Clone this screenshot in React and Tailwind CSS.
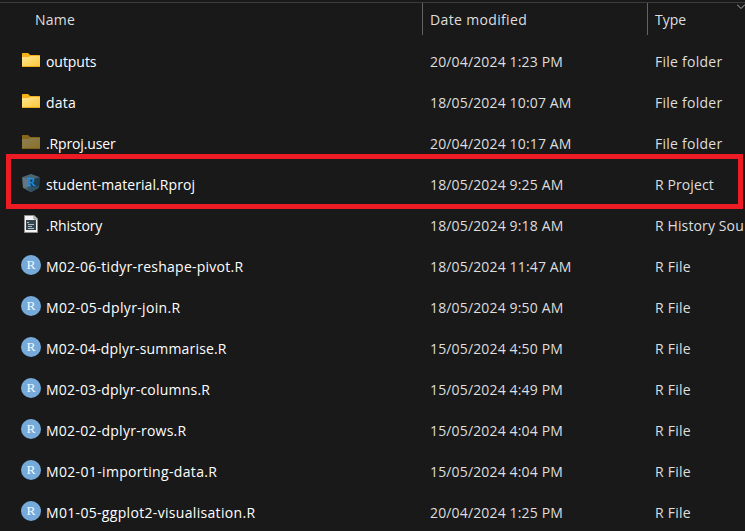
const files = [
  { icon: 'folder', name: 'outputs', nameFit: 'tracking-[-0.05px]', date: '20/04/2024 1:23 PM', type: 'File folder', typeFit: 'tracking-[0.25px]' },
  { icon: 'folder', name: 'data', nameFit: 'tracking-[0.2px]', date: '18/05/2024 10:07 AM', type: 'File folder', typeFit: 'tracking-[0.25px]' },
  { icon: 'hidden', name: '.Rproj.user', nameFit: 'tracking-[-0.14px]', date: '20/04/2024 10:17 AM', type: 'File folder', typeFit: 'tracking-[0.25px]' },
  { icon: 'project', name: 'student-material.Rproj', nameFit: 'tracking-[0.07px]', date: '18/05/2024 9:25 AM', type: 'R Project', typeFit: 'tracking-[0.1px]', marked: true },
  { icon: 'history', name: '.Rhistory', nameFit: 'tracking-[-0.12px]', date: '18/05/2024 9:18 AM', type: 'R History Sou', typeFit: 'tracking-[0.12px]' },
  { icon: 'script', name: 'M02-06-tidyr-reshape-pivot.R', nameFit: 'tracking-[0.25px]', date: '18/05/2024 11:47 AM', type: 'R File', typeFit: 'tracking-[0.25px]' },
  { icon: 'script', name: 'M02-05-dplyr-join.R', nameFit: 'tracking-[0.35px]', date: '18/05/2024 9:50 AM', type: 'R File', typeFit: 'tracking-[0.25px]' },
  { icon: 'script', name: 'M02-04-dplyr-summarise.R', nameFit: 'tracking-[0.17px]', date: '15/05/2024 4:50 PM', type: 'R File', typeFit: 'tracking-[0.25px]' },
  { icon: 'script', name: 'M02-03-dplyr-columns.R', nameFit: 'tracking-[0.22px]', date: '15/05/2024 4:49 PM', type: 'R File', typeFit: 'tracking-[0.25px]' },
  { icon: 'script', name: 'M02-02-dplyr-rows.R', nameFit: 'tracking-[0.26px]', date: '15/05/2024 4:04 PM', type: 'R File', typeFit: 'tracking-[0.25px]' },
  { icon: 'script', name: 'M02-01-importing-data.R', nameFit: 'tracking-[0.34px]', date: '15/05/2024 4:04 PM', type: 'R File', typeFit: 'tracking-[0.25px]' },
  { icon: 'script', name: 'M01-05-ggplot2-visualisation.R', nameFit: 'tracking-[0.32px]', date: '20/04/2024 1:25 PM', type: 'R File', typeFit: 'tracking-[0.25px]' },
];

function FolderIcon({ className = '' }) {
  return (
    <svg width="20" height="20" viewBox="0 0 20 20" className={className}>
      <defs>
        <linearGradient id="folderFront" x1="0" y1="0" x2="1" y2="1">
          <stop offset="0" stopColor="#ffe594" />
          <stop offset="1" stopColor="#fdc834" />
        </linearGradient>
      </defs>
      <path d="M1 3.6Q1 3 1.6 3H7L9.2 5H18.4Q19 5 19 5.6V9H1Z" fill="#f7b117" />
      <path d="M1 7H7.5L9.3 6H19V16.4Q19 17 18.4 17H1.6Q1 17 1 16.4Z" fill="url(#folderFront)" />
      <path d="M1 16H19V16.4Q19 17 18.4 17H1.6Q1 17 1 16.4Z" fill="#e9a91c" />
    </svg>
  );
}

function ProjectIcon() {
  return (
    <svg width="20" height="20" viewBox="0 0 20 20">
      <path d="M10 1L18.8 4.3L18 14.8L10 19.2L2 14.8L1.2 4.3Z" fill="#2f4654" />
      <path d="M10 1L18.8 4.3L10 7L1.2 4.3Z" fill="#4f6672" />
      <path d="M1.2 4.3L7 5.8V17.4L2 14.8Z" fill="#66767e" />
      <path d="M7 5.8L10 7V19.2L7 17.4Z" fill="#3d535f" />
      <path d="M10 7L18.8 4.3L18 14.8L10 19.2Z" fill="#203c50" />
      <path d="M14 14L18.2 12.4L18 14.8L10 19.2L3 15.2L7 13.8Z" fill="#38596b" opacity=".7" />
      <text x="10.4" y="13" textAnchor="middle" fontSize="12.5" fill="#1598ea" stroke="#1598ea" strokeWidth=".3" className="font-['Liberation_Serif',serif]">R</text>
    </svg>
  );
}

function HistoryIcon() {
  return (
    <svg width="20" height="20" viewBox="0 0 20 20">
      <path d="M3.5 1.5H13L16.5 5V18.5H3.5Z" fill="#f4f4f4" stroke="#919191" />
      <path d="M13 1.5V5H16.5" fill="#d8d8d8" stroke="#919191" />
      <path d="M5 6H15V16H5Z" fill="#33454e" />
      <path d="M6 8.5H8M7 10.5H13M7 12.5H11M7 14.5H13" stroke="#aebbc1" />
    </svg>
  );
}

function ScriptIcon() {
  return (
    <svg width="20" height="20" viewBox="0 0 20 20">
      <circle cx="10" cy="10" r="10" fill="#75aadb" />
      <text x="10.1" y="14" textAnchor="middle" fontSize="13.5" fill="#f4f8fc" className="font-['Liberation_Serif',serif]">R</text>
    </svg>
  );
}

const icons = {
  folder: <FolderIcon />,
  hidden: <FolderIcon className="opacity-50" />,
  project: <ProjectIcon />,
  history: <HistoryIcon />,
  script: <ScriptIcon />,
};

function FileRow({ file }) {
  return (
    <div className="relative flex h-[41px] shrink-0 items-center">
      <div className="flex w-[430px] shrink-0 items-center pl-[21px] text-white">
        <span className="mb-[3px] mr-[5px] shrink-0">{icons[file.icon]}</span>
        <span className={file.nameFit}>{file.name}</span>
      </div>
      <div className="w-[225px] shrink-0 tracking-[0.15px]">{file.date}</div>
      <div className={`shrink-0 ${file.typeFit}`}>{file.type}</div>
      {file.marked && <div className="absolute left-1.5 -top-[10px] h-[55px] w-[737px] border-[5px] border-[#ed1c24]" />}
    </div>
  );
}

export default function App() {
  return (
    <div className="flex h-[531px] w-[745px] flex-col overflow-hidden bg-[#191919] font-['Open_Sans','Noto_Sans',sans-serif] text-sm whitespace-nowrap text-[#dedede]">
      <div className="mt-0.5 h-px shrink-0 bg-[#3c3c3c]" />
      <div className="flex h-8 shrink-0 items-center">
        <div className="w-[422px] pt-0.5 pl-[35px] tracking-[0.2px]">Name</div>
        <div className="flex h-full w-[225px] items-center border-l border-[#636363] pt-0.5 pl-[7px] tracking-[0.35px]">Date modified</div>
        <div className="flex h-full flex-1 items-center justify-between border-l border-[#636363] pl-[7px]">
          <span className="pt-0.5">Type</span>
          <svg width="8" height="6" viewBox="0 0 8 6" className="mt-px self-start" fill="none" stroke="#b5b5b5">
            <path d="M0 .5L4 4.5L8 .5" />
          </svg>
        </div>
      </div>
      <div className="flex flex-col pt-1.5">
        {files.map((file) => (
          <FileRow key={file.name} file={file} />
        ))}
      </div>
    </div>
  );
}
